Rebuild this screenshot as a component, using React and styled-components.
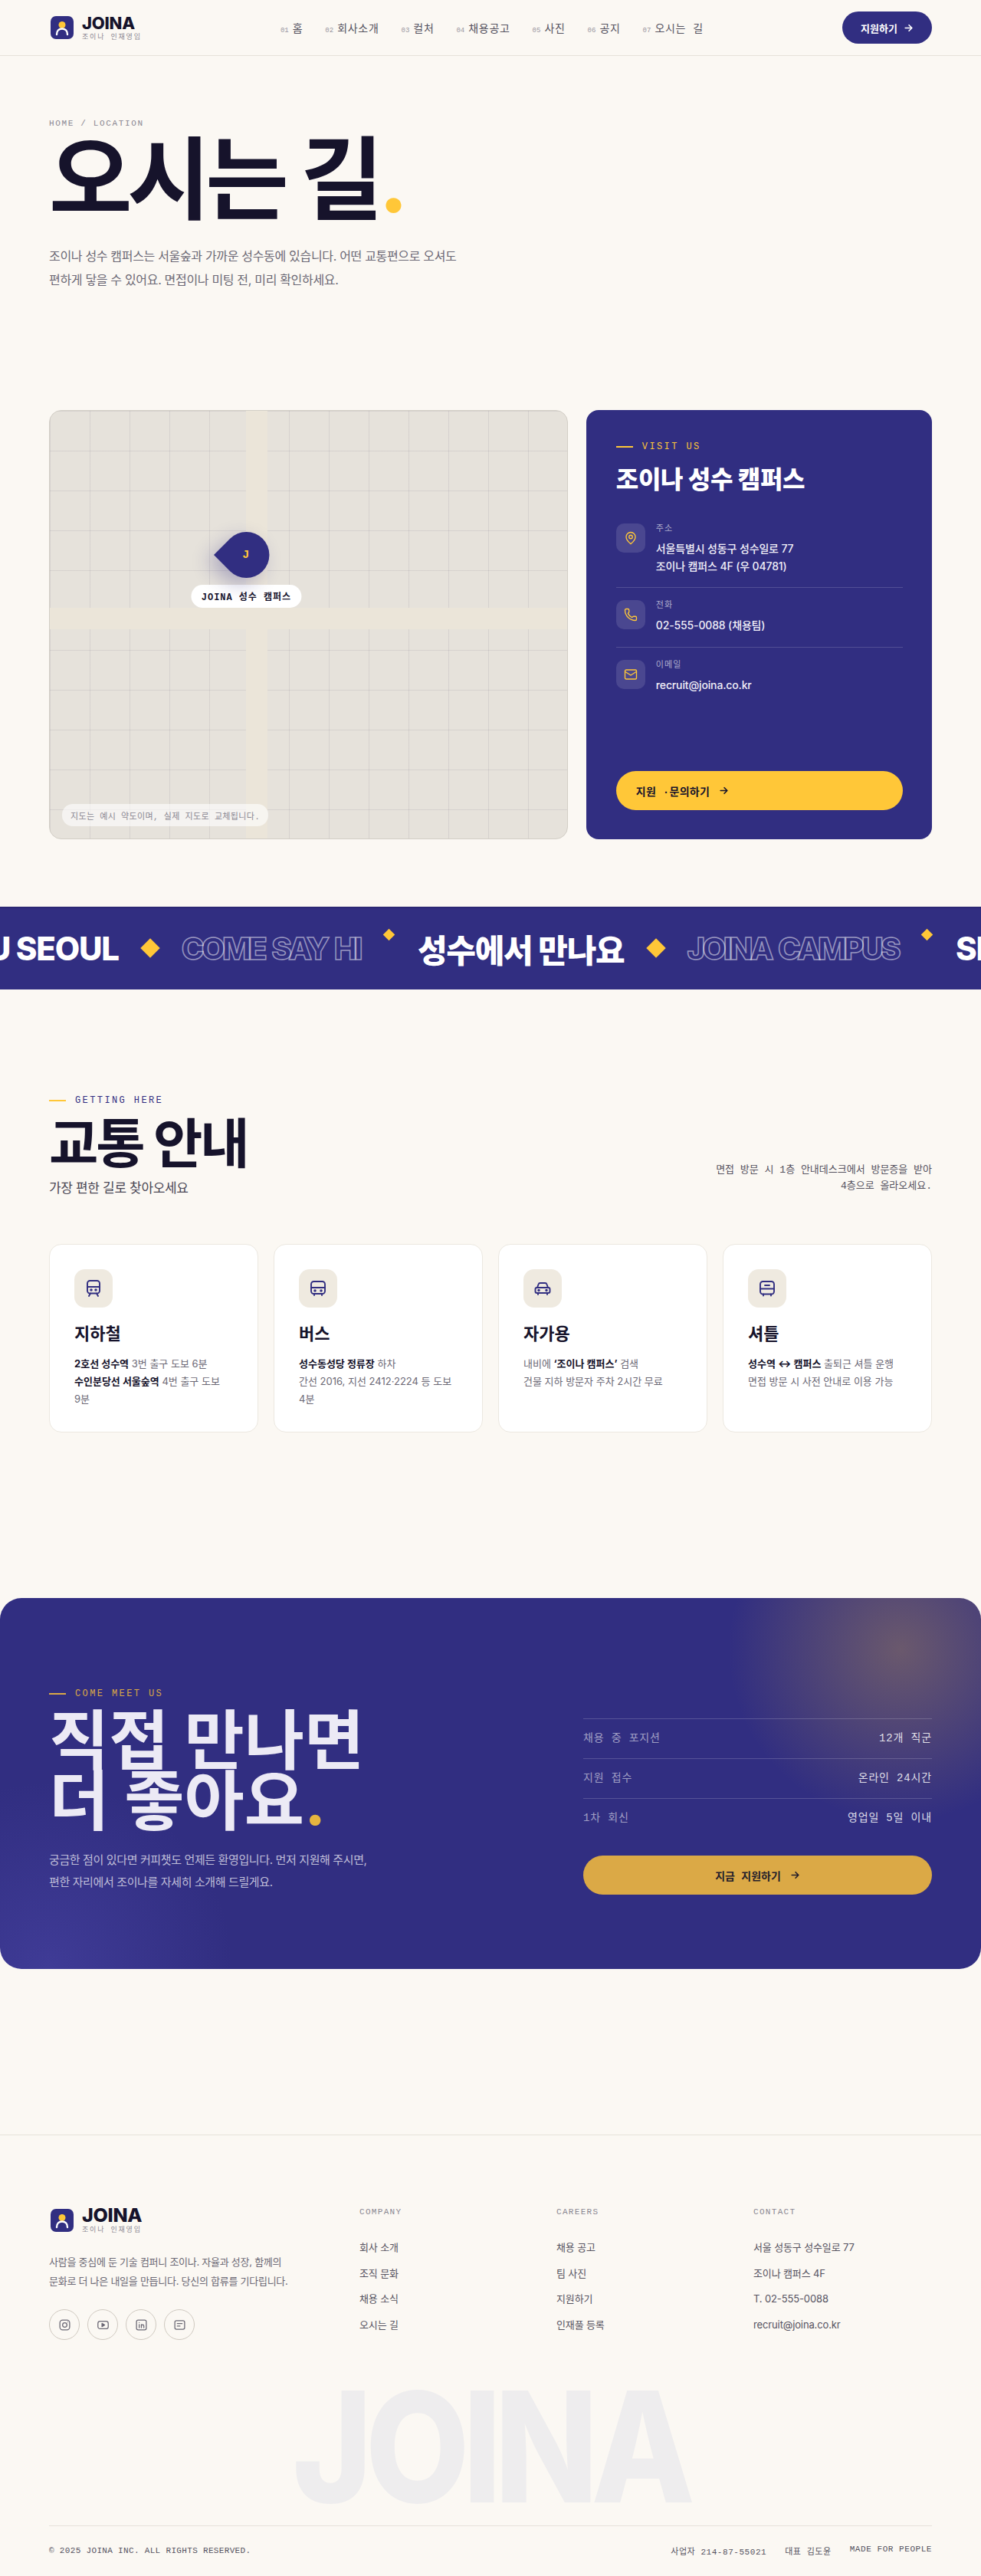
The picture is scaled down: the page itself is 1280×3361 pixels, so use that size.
import React from 'react'
import styled, {createGlobalStyle} from 'styled-components'
import {MapPin, Phone, Mail} from 'lucide-react'

const SANS = `Inter, "Noto Sans CJK KR", sans-serif`
const MONO = `"Liberation Mono", "Noto Sans CJK KR", monospace`
const NAVY = '#312e81'
const YELLOW = '#ffc738'
const INK = '#16132b'
const GREY = '#6b6875'

const GlobalStyle = createGlobalStyle`
    * { box-sizing: border-box; }
    body {
        margin: 0;
        background: #fbf8f3;
        color: ${INK};
        font-family: ${SANS};
    }
`

function Logo() {
    return (
        <svg width="34" height="34" viewBox="0 0 34 34">
            <rect x="2" y="2" width="30" height="30" rx="7" fill={NAVY} />
            <circle cx="17" cy="13.5" r="4.5" fill={YELLOW} />
            <path d="M10 26c0-5 3-7.500 7-7.500s7 2.500 7 7.500" fill="none" stroke="#fff" strokeWidth="2.400" strokeLinecap="round" />
        </svg>
    )
}

function Arrow() {
    return (
        <svg width="13" height="13" viewBox="0 0 24 24" fill="none" stroke="currentColor" strokeWidth="3" strokeLinecap="round" strokeLinejoin="round">
            <path d="M4 12h16M13 5l7 7-7 7" />
        </svg>
    )
}

const TRANSIT_ICONS = {
    subway: (
        <>
            <rect x="4" y="2" width="16" height="16.500" rx="3.500" />
            <path d="M4 10h16M8 18.500 6 22M16 18.500l2 3.500" />
            <circle cx="9" cy="14" r=".8" />
            <circle cx="15" cy="14" r=".8" />
        </>
    ),
    bus: (
        <>
            <rect x="3" y="3" width="18" height="16" rx="3.500" />
            <path d="M3 11h18M7 19v2M17 19v2" />
            <circle cx="8" cy="15" r=".8" />
            <circle cx="16" cy="15" r=".8" />
        </>
    ),
    car: (
        <>
            <path d="M5 11l1.500-4.200A2.500 2.500 0 0 1 8.900 5h6.200a2.500 2.500 0 0 1 2.400 1.800L19 11" />
            <rect x="2.500" y="11" width="19" height="7" rx="2" />
            <path d="M6 18v2M18 18v2" />
            <circle cx="7" cy="14.500" r=".8" />
            <circle cx="17" cy="14.500" r=".8" />
        </>
    ),
    shuttle: (
        <>
            <rect x="3" y="3" width="18" height="16.500" rx="3.500" />
            <path d="M3 12.500h18M9 8h6M7 19.500v2M17 19.500v2" />
        </>
    ),
}

function TransitIcon({name}) {
    return (
        <svg width="24" height="24" viewBox="0 0 24 24" fill="none" stroke={NAVY} strokeWidth="1.900" strokeLinecap="round" strokeLinejoin="round">
            {TRANSIT_ICONS[name]}
        </svg>
    )
}

const SOCIAL_ICONS = {
    instagram: (
        <>
            <rect x="3" y="3" width="18" height="18" rx="5" />
            <circle cx="12" cy="12" r="4" />
            <path d="M17.500 6.500h.01" />
        </>
    ),
    youtube: (
        <>
            <rect x="2.500" y="5" width="19" height="14" rx="4" />
            <path d="m10 9 5 3-5 3z" fill="currentColor" />
        </>
    ),
    linkedin: (
        <>
            <rect x="3" y="3" width="18" height="18" rx="3" />
            <path d="M8 11v6M8 7.500v.01M12 17v-6M12 14c0-3.500 4.500-3.500 4.500 0v3" />
        </>
    ),
    blog: (
        <>
            <rect x="3" y="4" width="18" height="16" rx="3" />
            <path d="M7.500 9.500h9M7.500 14h5" />
        </>
    ),
}

function SocialIcon({name}) {
    return (
        <svg width="17" height="17" viewBox="0 0 24 24" fill="none" stroke="currentColor" strokeWidth="1.800" strokeLinecap="round" strokeLinejoin="round">
            {SOCIAL_ICONS[name]}
        </svg>
    )
}

const NAV = [['01', '홈'], ['02', '회사소개'], ['03', '컬처'], ['04', '채용공고'], ['05', '사진'], ['06', '공지'], ['07', '오시는 길']]

const MODES = [
    {icon: 'subway', title: '지하철', lines: [<><b>2호선 성수역</b> 3번 출구 도보 6분</>, <><b>수인분당선 서울숲역</b> 4번 출구 도보 9분</>]},
    {icon: 'bus', title: '버스', lines: [<><b>성수동성당 정류장</b> 하차</>, <>간선 2016, 지선 2412·2224 등 도보 4분</>]},
    {icon: 'car', title: '자가용', lines: [<>내비에 <b>‘조이나 캠퍼스’</b> 검색</>, <>건물 지하 방문자 주차 2시간 무료</>]},
    {icon: 'shuttle', title: '셔틀', lines: [<><b>성수역 ↔ 캠퍼스</b> 출퇴근 셔틀 운행</>, <>면접 방문 시 사전 안내로 이용 가능</>]},
]

const FACTS = [['채용 중 포지션', '12개 직군'], ['지원 접수', '온라인 24시간'], ['1차 회신', '영업일 5일 이내']]

const FOOTER_COLS = [
    {title: 'COMPANY', links: ['회사 소개', '조직 문화', '채용 소식', '오시는 길']},
    {title: 'CAREERS', links: ['채용 공고', '팀 사진', '지원하기', '인재풀 등록']},
    {title: 'CONTACT', links: ['서울 성동구 성수일로 77', '조이나 캠퍼스 4F', 'T. 02-555-0088', 'recruit@joina.co.kr']},
]

function App() {
    return (
        <>
            <GlobalStyle />
            <Header>
                <Brand>
                    <Logo />
                    <BrandText>
                        <BrandName>JOINA</BrandName>
                        <BrandSub>조이나 인재영입</BrandSub>
                    </BrandText>
                </Brand>
                <Nav>
                    {NAV.map(([num, label]) => (
                        <NavItem key={num}><small>{num}</small>{label}</NavItem>
                    ))}
                </Nav>
                <HeaderButton>지원하기 <Arrow /></HeaderButton>
            </Header>

            <Hero>
                <Crumb>HOME / LOCATION</Crumb>
                <HeroTitle>오시는 길<Dot>.</Dot></HeroTitle>
                <HeroText>
                    조이나 성수 캠퍼스는 서울숲과 가까운 성수동에 있습니다. 어떤 교통편으로 오셔도<br />
                    편하게 닿을 수 있어요. 면접이나 미팅 전, 미리 확인하세요.
                </HeroText>
            </Hero>

            <Visit>
                <MapBox>
                    <RoadV />
                    <RoadH />
                    <PinWrap>
                        <Pin><span>J</span></Pin>
                        <PinLabel>JOINA 성수 캠퍼스</PinLabel>
                    </PinWrap>
                    <MapNote>지도는 예시 약도이며, 실제 지도로 교체됩니다.</MapNote>
                </MapBox>
                <InfoCard>
                    <Eyebrow $color={YELLOW}>VISIT US</Eyebrow>
                    <InfoTitle>조이나 성수 캠퍼스</InfoTitle>
                    <InfoRow>
                        <InfoIcon><MapPin size={18} strokeWidth={1.8} /></InfoIcon>
                        <div>
                            <InfoLabel>주소</InfoLabel>
                            <InfoValue>서울특별시 성동구 성수일로 77<br />조이나 캠퍼스 4F (우 04781)</InfoValue>
                        </div>
                    </InfoRow>
                    <InfoRow>
                        <InfoIcon><Phone size={18} strokeWidth={1.8} /></InfoIcon>
                        <div>
                            <InfoLabel>전화</InfoLabel>
                            <InfoValue>02-555-0088 (채용팀)</InfoValue>
                        </div>
                    </InfoRow>
                    <InfoRow $last>
                        <InfoIcon><Mail size={18} strokeWidth={1.8} /></InfoIcon>
                        <div>
                            <InfoLabel>이메일</InfoLabel>
                            <InfoValue>recruit@joina.co.kr</InfoValue>
                        </div>
                    </InfoRow>
                    <InfoButton>지원 ·문의하기 <Arrow /></InfoButton>
                </InfoCard>
            </Visit>

            <Marquee>
                <MarqueeTrack>
                    <MarqueeText>SEE YOU SEOUL</MarqueeText>
                    <Diamond />
                    <MarqueeText $outline>COME SAY HI</MarqueeText>
                    <Diamond $small />
                    <MarqueeText>성수에서 만나요</MarqueeText>
                    <Diamond />
                    <MarqueeText $outline>JOINA CAMPUS</MarqueeText>
                    <Diamond $small />
                    <MarqueeText>SEE YOU SEOUL</MarqueeText>
                </MarqueeTrack>
            </Marquee>

            <Transit>
                <TransitHead>
                    <div>
                        <Eyebrow $color={NAVY}>GETTING HERE</Eyebrow>
                        <TransitTitle>교통 안내</TransitTitle>
                        <TransitSub>가장 편한 길로 찾아오세요</TransitSub>
                    </div>
                    <TransitNote>면접 방문 시 1층 안내데스크에서 방문증을 받아<br />4층으로 올라오세요.</TransitNote>
                </TransitHead>
                <CardGrid>
                    {MODES.map((mode) => (
                        <ModeCard key={mode.icon}>
                            <ModeIcon><TransitIcon name={mode.icon} /></ModeIcon>
                            <ModeTitle>{mode.title}</ModeTitle>
                            {mode.lines.map((line, i) => <ModeLine key={i}>{line}</ModeLine>)}
                        </ModeCard>
                    ))}
                </CardGrid>
            </Transit>

            <Cta>
                <CtaLead>
                    <Eyebrow $color="#dba946">COME MEET US</Eyebrow>
                    <CtaTitle>직접 만나면<br />더 좋아요<CtaDot>.</CtaDot></CtaTitle>
                    <CtaText>
                        궁금한 점이 있다면 커피챗도 언제든 환영입니다. 먼저 지원해 주시면,<br />
                        편한 자리에서 조이나를 자세히 소개해 드릴게요.
                    </CtaText>
                </CtaLead>
                <div>
                    {FACTS.map(([label, value]) => (
                        <Fact key={label}>
                            <span>{label}</span>
                            <FactValue>{value}</FactValue>
                        </Fact>
                    ))}
                    <CtaButton>지금 지원하기 <Arrow /></CtaButton>
                </div>
            </Cta>

            <Footer>
                <FooterGrid>
                    <div>
                        <Brand>
                            <Logo />
                            <BrandText>
                                <BrandName $large>JOINA</BrandName>
                                <BrandSub>조이나 인재영입</BrandSub>
                            </BrandText>
                        </Brand>
                        <FooterAbout>
                            사람을 중심에 둔 기술 컴퍼니 조이나. 자율과 성장, 함께의<br />
                            문화로 더 나은 내일을 만듭니다. 당신의 합류를 기다립니다.
                        </FooterAbout>
                        <Socials>
                            {Object.keys(SOCIAL_ICONS).map((name) => (
                                <SocialLink key={name}><SocialIcon name={name} /></SocialLink>
                            ))}
                        </Socials>
                    </div>
                    {FOOTER_COLS.map((col) => (
                        <div key={col.title}>
                            <ColTitle>{col.title}</ColTitle>
                            {col.links.map((link) => <ColLink key={link}>{link}</ColLink>)}
                        </div>
                    ))}
                </FooterGrid>
                <Watermark>JOINA</Watermark>
                <FooterBottom>
                    <Copyright>© 2025 JOINA INC. ALL RIGHTS RESERVED.</Copyright>
                    <FooterMeta>
                        <span>사업자 214-87-55021</span>
                        <span>대표 김도윤</span>
                        <span>MADE FOR PEOPLE</span>
                    </FooterMeta>
                </FooterBottom>
            </Footer>
        </>
    )
}

export default App;

const Header = styled.header`
    height: 73px;
    padding: 0 64px;
    display: flex;
    align-items: center;
    justify-content: space-between;
    border-bottom: 1px solid #e6e2da;
`

const Brand = styled.div`
    display: flex;
    align-items: center;
    gap: 9px;
`

const BrandText = styled.div`
    display: flex;
    flex-direction: column;
`

const BrandName = styled.div`
    font-size: ${(p) => (p.$large ? '25px' : '22px')};
    font-weight: 800;
    line-height: ${(p) => (p.$large ? '28px' : '26px')};
    letter-spacing: -0.01em;
    color: ${INK};
`

const BrandSub = styled.div`
    font-family: ${MONO};
    font-size: 9px;
    line-height: 13px;
    letter-spacing: 0.2em;
    color: #8a8792;
`

const Nav = styled.nav`
    display: flex;
    align-items: center;
    gap: 29px;
`

const NavItem = styled.a`
    font-family: ${MONO};
    font-size: 14px;
    letter-spacing: 0.05em;
    color: #55525f;

    small {
        font-size: 9px;
        letter-spacing: 0;
        color: #9a97a1;
        margin-right: 5px;
    }
`

const HeaderButton = styled.a`
    width: 117px;
    height: 42px;
    border-radius: 21px;
    background: ${NAVY};
    color: #fff;
    font-size: 13px;
    font-weight: 700;
    display: flex;
    align-items: center;
    justify-content: center;
    gap: 8px;
`

const Hero = styled.section`
    padding: 80px 64px 0;
`

const Crumb = styled.div`
    font-family: ${MONO};
    font-size: 11px;
    line-height: 16px;
    letter-spacing: 0.15em;
    color: #8a8792;
`

const HeroTitle = styled.h1`
    margin: 0;
    font-size: 118px;
    font-weight: 700;
    line-height: 130px;
    letter-spacing: -0.055em;
    color: ${INK};
`

const Dot = styled.span`
    color: ${YELLOW};
`

const HeroText = styled.p`
    margin: 20px 0 0;
    font-size: 16px;
    line-height: 31px;
    letter-spacing: -0.02em;
    color: ${GREY};
`

const Visit = styled.section`
    margin-top: 154px;
    padding: 0 64px;
    display: grid;
    grid-template-columns: 1.5fr 1fr;
    gap: 24px;
`

const MapBox = styled.div`
    position: relative;
    height: 560px;
    overflow: hidden;
    border: 1px solid #d2cec6;
    border-radius: 16px;
    background-color: #e6e2db;
    background-image:
        linear-gradient(rgba(26, 23, 60, 0.08) 1px, transparent 1px),
        linear-gradient(90deg, rgba(26, 23, 60, 0.08) 1px, transparent 1px);
    background-size: 52px 52px;
`

const RoadV = styled.div`
    position: absolute;
    top: 0;
    bottom: 0;
    left: 38%;
    width: 28px;
    background: #ebe5d9;
`

const RoadH = styled.div`
    position: absolute;
    left: 0;
    right: 0;
    top: 46%;
    height: 28px;
    background: #ebe5d9;
`

const PinWrap = styled.div`
    position: absolute;
    left: 38%;
    top: 46%;
    transform: translate(-50%, -100%);
    display: flex;
    flex-direction: column;
    align-items: center;
    gap: 9px;
`

const Pin = styled.div`
    width: 60px;
    height: 60px;
    display: flex;
    align-items: center;
    justify-content: center;
    background: ${NAVY};
    border-radius: 50% 50% 50% 0;
    transform: rotate(45deg);
    box-shadow: 0 12px 24px rgba(46, 42, 128, 0.3);

    span {
        transform: rotate(-45deg);
        font-family: ${MONO};
        font-size: 15px;
        font-weight: 700;
        color: ${YELLOW};
    }
`

const PinLabel = styled.div`
    height: 30px;
    padding: 0 13px;
    display: flex;
    align-items: center;
    white-space: nowrap;
    border-radius: 15px;
    background: #fff;
    font-family: ${MONO};
    font-size: 12px;
    font-weight: 700;
    letter-spacing: 0.08em;
    color: ${INK};
`

const MapNote = styled.div`
    position: absolute;
    left: 16px;
    bottom: 16px;
    height: 29px;
    padding: 0 11px;
    display: flex;
    align-items: center;
    border-radius: 14px;
    background: rgba(255, 255, 255, 0.6);
    font-family: ${MONO};
    font-size: 11px;
    letter-spacing: 0.03em;
    color: #8a8792;
`

const InfoCard = styled.div`
    height: 560px;
    padding: 40px 38px 38px 39px;
    display: flex;
    flex-direction: column;
    border-radius: 16px;
    background: ${NAVY};
    color: #fff;
`

const Eyebrow = styled.div`
    display: flex;
    align-items: center;
    gap: 12px;
    font-family: ${MONO};
    font-size: 12px;
    line-height: 16px;
    letter-spacing: 0.2em;
    color: ${(p) => p.$color};

    &::before {
        content: '';
        width: 22px;
        height: 2px;
        background: ${(p) => (p.$color === NAVY ? YELLOW : p.$color)};
    }
`

const InfoTitle = styled.h2`
    margin: 12px 0 34px;
    font-size: 32px;
    font-weight: 800;
    line-height: 46px;
    letter-spacing: -0.01em;
`

const InfoRow = styled.div`
    display: flex;
    gap: 14px;
    padding-bottom: ${(p) => (p.$last ? '0' : '16px')};
    margin-bottom: ${(p) => (p.$last ? '0' : '16px')};
    border-bottom: ${(p) => (p.$last ? 'none' : '1px solid rgba(255, 255, 255, 0.16)')};
`

const InfoIcon = styled.div`
    width: 38px;
    height: 38px;
    flex: none;
    display: flex;
    align-items: center;
    justify-content: center;
    border-radius: 10px;
    background: rgba(255, 255, 255, 0.12);
    color: ${YELLOW};
`

const InfoLabel = styled.div`
    font-family: ${MONO};
    font-size: 11px;
    line-height: 14px;
    letter-spacing: 0.1em;
    color: rgba(255, 255, 255, 0.6);
`

const InfoValue = styled.div`
    margin-top: 8px;
    font-size: 14px;
    font-weight: 500;
    line-height: 22.5px;
    letter-spacing: -0.01em;
    color: #f1f0f8;
`

const InfoButton = styled.a`
    margin-top: auto;
    height: 51px;
    padding: 0 26px;
    display: flex;
    align-items: center;
    gap: 12px;
    border-radius: 26px;
    background: ${YELLOW};
    font-family: ${MONO};
    font-size: 14px;
    font-weight: 700;
    letter-spacing: 0.02em;
    color: ${INK};
`

const Marquee = styled.section`
    margin-top: 88px;
    height: 108px;
    padding-bottom: 2px;
    overflow: hidden;
    display: flex;
    align-items: center;
    background: ${NAVY};
    border-top: 2px solid #2b2874;
`

const MarqueeTrack = styled.div`
    display: flex;
    align-items: center;
    gap: 32px;
    white-space: nowrap;
    transform: translateX(-159px);
`

const MarqueeText = styled.span`
    font-size: ${(p) => (p.$outline ? '40px' : '42px')};
    font-weight: 800;
    letter-spacing: ${(p) => (p.$outline ? '-0.09em' : '-0.03em')};
    word-spacing: ${(p) => (p.$outline ? '0.1em' : '0')};
    color: ${(p) => (p.$outline ? 'transparent' : '#fff')};
    -webkit-text-stroke: ${(p) => (p.$outline ? '1.5px rgba(255, 255, 255, 0.5)' : '0')};
`

const Diamond = styled.i`
    flex: none;
    width: ${(p) => (p.$small ? '11px' : '18px')};
    height: ${(p) => (p.$small ? '11px' : '18px')};
    margin-bottom: ${(p) => (p.$small ? '35px' : '0')};
    background: ${YELLOW};
    transform: rotate(45deg);
`

const Transit = styled.section`
    padding: 137px 64px 0;
`

const TransitHead = styled.div`
    display: flex;
    align-items: flex-end;
    justify-content: space-between;
`

const TransitTitle = styled.h2`
    margin: 8px 0 0;
    font-size: 70px;
    font-weight: 700;
    line-height: 82px;
    letter-spacing: -0.045em;
    color: ${INK};
`

const TransitSub = styled.div`
    margin-top: 3px;
    font-size: 17px;
    line-height: 26px;
    letter-spacing: -0.02em;
    color: #4a4755;
`

const TransitNote = styled.div`
    padding-bottom: 5px;
    text-align: right;
    font-family: ${MONO};
    font-size: 13px;
    line-height: 21px;
    color: #55525f;
`

const CardGrid = styled.div`
    margin-top: 60px;
    display: grid;
    grid-template-columns: repeat(4, 1fr);
    gap: 20px;
`

const ModeCard = styled.div`
    height: 246px;
    padding: 32px;
    border: 1px solid #ece8e0;
    border-radius: 16px;
    background: #fff;
`

const ModeIcon = styled.div`
    width: 50px;
    height: 50px;
    display: flex;
    align-items: center;
    justify-content: center;
    border-radius: 14px;
    background: #efeae0;
`

const ModeTitle = styled.h3`
    margin: 19px 0 13px;
    font-size: 22px;
    font-weight: 700;
    line-height: 30px;
    color: ${INK};
`

const ModeLine = styled.p`
    margin: 0;
    font-size: 13px;
    line-height: 23px;
    word-break: keep-all;
    color: ${GREY};

    b {
        font-weight: 700;
        color: ${INK};
    }
`

const Cta = styled.section`
    margin-top: 216px;
    height: 484px;
    padding: 114px 64px 97px;
    display: grid;
    grid-template-columns: 1fr 455px;
    align-items: end;
    border-radius: 28px;
    background-color: ${NAVY};
    background-image:
        radial-gradient(circle 225px at 1175px 67px, rgba(255, 199, 56, 0.28), rgba(255, 199, 56, 0) 100%),
        radial-gradient(circle 240px at 64px 480px, rgba(90, 84, 190, 0.34), rgba(90, 84, 190, 0) 100%);
`

const CtaLead = styled.div`
    padding-bottom: 2px;
`

const CtaTitle = styled.h2`
    margin: 14px 0 0;
    font-size: 85px;
    font-weight: 700;
    line-height: 79px;
    color: #eceaf5;
`

const CtaDot = styled.span`
    color: #e6b43f;
`

const CtaText = styled.p`
    margin: 22px 0 0;
    font-size: 15px;
    line-height: 29px;
    letter-spacing: -0.025em;
    color: #c0bfd9;
`

const Fact = styled.div`
    height: 52px;
    padding-bottom: 5px;
    display: flex;
    align-items: center;
    justify-content: space-between;
    border-top: 1px solid rgba(255, 255, 255, 0.18);
    font-family: ${MONO};
    font-size: 14px;
    letter-spacing: 0.06em;
    color: rgba(255, 255, 255, 0.55);
`

const FactValue = styled.span`
    color: rgba(255, 255, 255, 0.85);
`

const CtaButton = styled.a`
    margin-top: 23px;
    height: 51px;
    display: flex;
    align-items: center;
    justify-content: center;
    gap: 12px;
    border-radius: 26px;
    background: #dba946;
    font-family: ${MONO};
    font-size: 14px;
    font-weight: 700;
    color: #231d2b;
`

const Footer = styled.footer`
    margin-top: 216px;
    padding: 90px 64px 0;
    border-top: 1px solid #e6e2da;
`

const FooterGrid = styled.div`
    display: grid;
    grid-template-columns: 381px repeat(3, 1fr);
    gap: 24px;
`

const FooterAbout = styled.p`
    margin: 22px 0 0;
    font-size: 13px;
    line-height: 25px;
    letter-spacing: -0.02em;
    color: ${GREY};
`

const Socials = styled.div`
    margin-top: 24px;
    display: flex;
    gap: 10px;
`

const SocialLink = styled.a`
    width: 40px;
    height: 40px;
    display: flex;
    align-items: center;
    justify-content: center;
    border: 1px solid #cfc9c0;
    border-radius: 50%;
    color: #6b6875;
`

const ColTitle = styled.div`
    padding-top: 2px;
    margin-bottom: 22px;
    font-family: ${MONO};
    font-size: 11px;
    line-height: 16px;
    letter-spacing: 0.12em;
    color: #8a8792;
`

const ColLink = styled.a`
    display: block;
    font-size: 13px;
    line-height: 33.500px;
    letter-spacing: -0.01em;
    color: #55525f;
`

const Watermark = styled.div`
    margin-top: 49px;
    text-align: center;
    font-size: 200px;
    font-weight: 800;
    line-height: 180px;
    letter-spacing: -0.05em;
    color: #eeedee;
    transform: scaleX(0.88);
`

const FooterBottom = styled.div`
    margin-top: 13px;
    height: 64px;
    display: flex;
    align-items: center;
    justify-content: space-between;
    border-top: 1px solid #e6e2da;
    font-family: ${MONO};
    font-size: 11px;
    letter-spacing: 0.05em;
    color: #55525f;
`

const Copyright = styled.span`
    letter-spacing: 0.03em;
`

const FooterMeta = styled.div`
    display: flex;
    gap: 24px;
`
